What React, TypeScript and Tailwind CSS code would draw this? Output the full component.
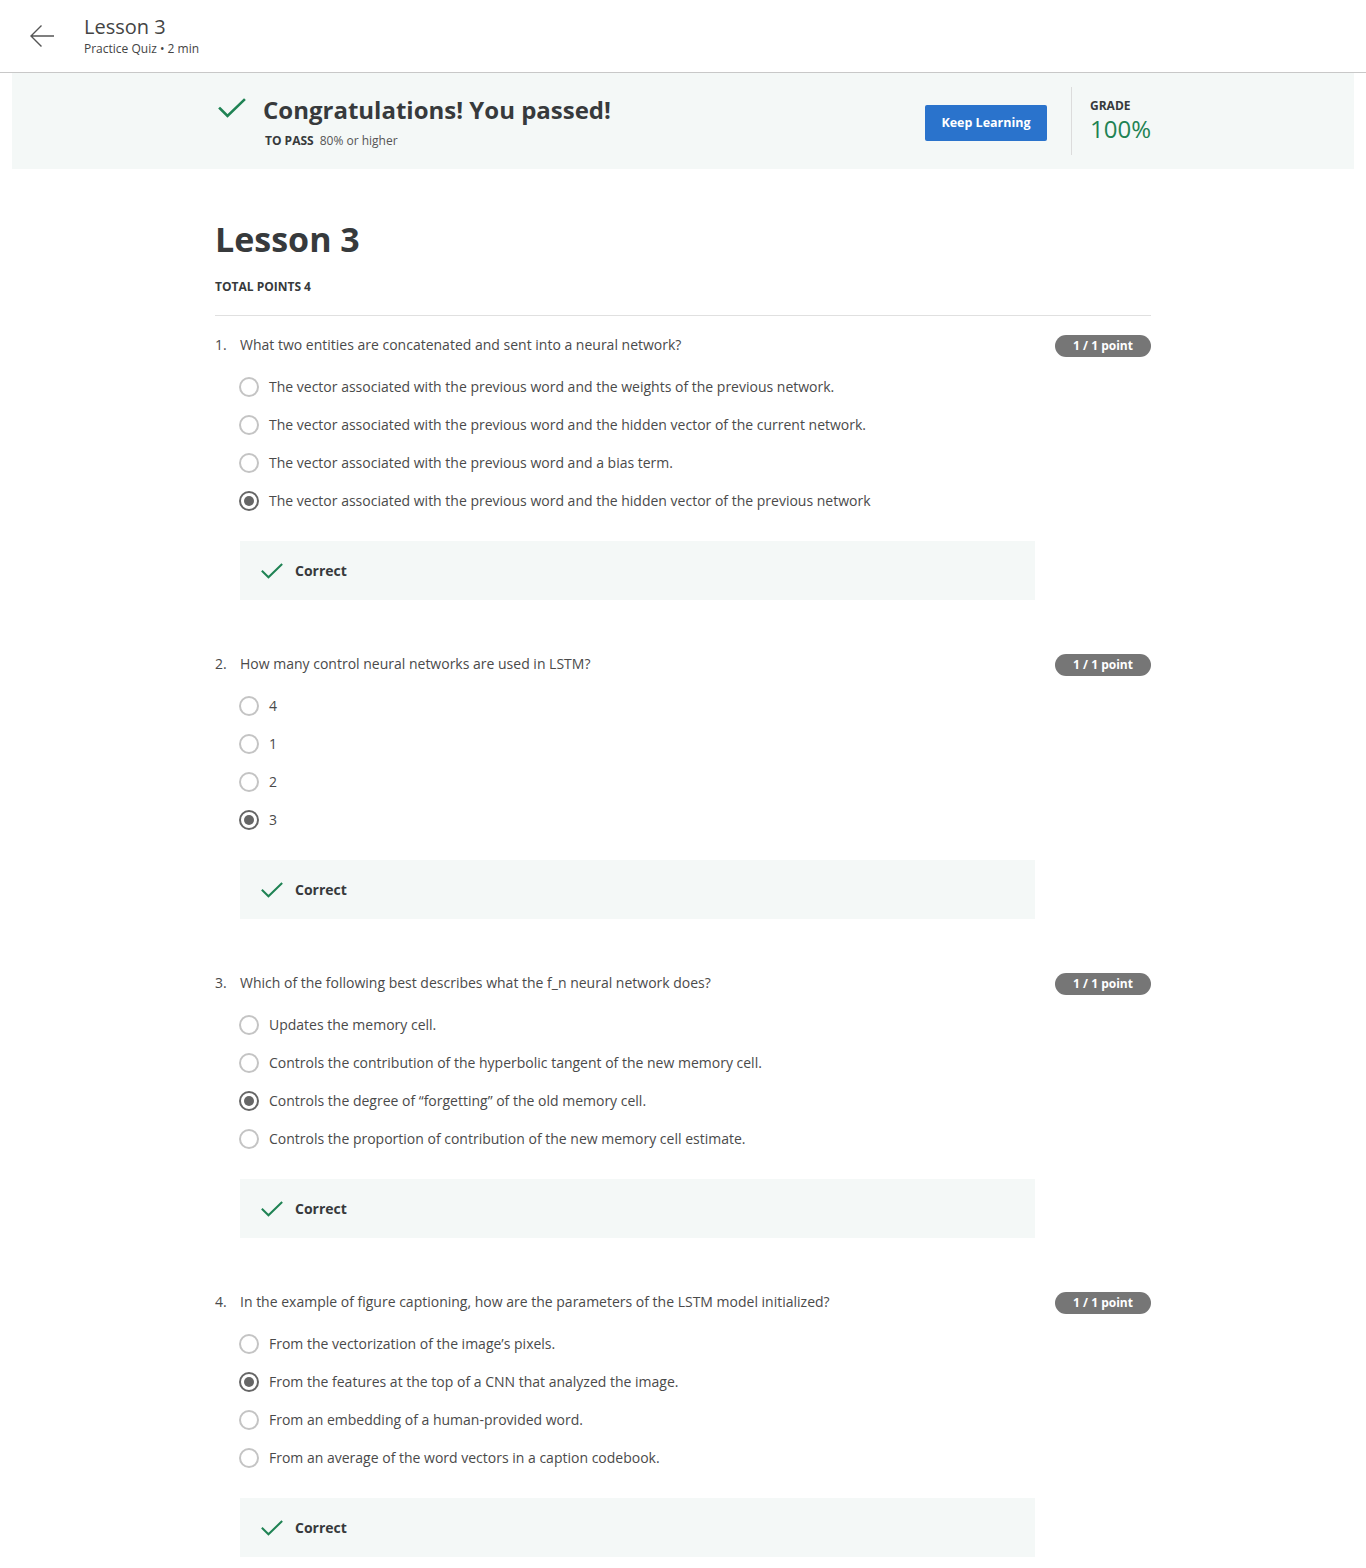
import React from "react";

const questions = [
  {
    q: "What two entities are concatenated and sent into a neural network?",
    options: [
      "The vector associated with the previous word and the weights of the previous network.",
      "The vector associated with the previous word and the hidden vector of the current network.",
      "The vector associated with the previous word and a bias term.",
      "The vector associated with the previous word and the hidden vector of the previous network",
    ],
    selected: 3,
  },
  {
    q: "How many control neural networks are used in LSTM?",
    options: ["4", "1", "2", "3"],
    selected: 3,
  },
  {
    q: "Which of the following best describes what the f_n neural network does?",
    options: [
      "Updates the memory cell.",
      "Controls the contribution of the hyperbolic tangent of the new memory cell.",
      "Controls the degree of \u201cforgetting\u201d of the old memory cell.",
      "Controls the proportion of contribution of the new memory cell estimate.",
    ],
    selected: 2,
  },
  {
    q: "In the example of figure captioning, how are the parameters of the LSTM model initialized?",
    options: [
      "From the vectorization of the image\u2019s pixels.",
      "From the features at the top of a CNN that analyzed the image.",
      "From an embedding of a human-provided word.",
      "From an average of the word vectors in a caption codebook.",
    ],
    selected: 1,
  },
];

function Check({ className }: { className?: string }) {
  return (
    <svg viewBox="0 0 28 20" className={className} fill="none">
      <path d="M2 10.5 L9.5 18 L26 2" stroke="#1f8354" strokeWidth="2.6" strokeLinecap="square" />
    </svg>
  );
}

function Radio({ checked }: { checked: boolean }) {
  return (
    <span
      className={`flex h-5 w-5 shrink-0 items-center justify-center rounded-full border-2 ${
        checked ? "border-[#666]" : "border-[#c4c4c4]"
      }`}
    >
      {checked && <span className="h-[10px] w-[10px] rounded-full bg-[#666]" />}
    </span>
  );
}

export default function App() {
  return (
    <div className="min-h-screen bg-white font-['Open_Sans',sans-serif] text-[#373a3c]">
      {/* top bar */}
      <header className="flex h-[73px] items-start border-b border-[#c8c8c8]">
        <button aria-label="Back" className="ml-[28px] mt-[24px] flex h-6 w-7 items-center justify-center">
          <svg viewBox="0 0 26 24" className="h-6 w-[26px]" fill="none">
            <path d="M25 12 H2 M12.5 1.5 L2 12 L12.5 22.5" stroke="#555" strokeWidth="1.4" />
          </svg>
        </button>
        <div className="ml-[28px] mt-[14px] flex flex-col">
          <span className="text-[20px] leading-[26px] text-[#444]">Lesson 3</span>
          <span className="mt-[1px] text-[12px] leading-[16px] text-[#444]">Practice Quiz • 2 min</span>
        </div>
      </header>

      {/* pass banner */}
      <section className="mx-3 flex h-[96px] items-center bg-[#f4f8f7]">
        <div className="mx-auto flex w-[936px] items-center">
          <Check className="ml-[3px] mt-[-26px] h-5 w-7" />
          <div className="ml-[17px] flex flex-col">
            <h2 className="text-[24px] font-bold leading-[32px] text-[#373a3c]">Congratulations! You passed!</h2>
            <p className="ml-[2px] mt-[7px] text-[12px] leading-[16px] text-[#555]">
              <span className="mr-[6px] font-bold text-[#373a3c]">TO PASS</span>80% or higher
            </p>
          </div>
          <div className="ml-auto flex items-center">
            <button className="mt-1 h-9 w-[122px] rounded-[2px] bg-[#2a73cc] text-[12.5px] font-bold text-white">
              Keep Learning
            </button>
            <div className="ml-6 h-[68px] w-px bg-[#dcdcdc]" />
            <div className="ml-[18px] flex w-[61px] flex-col">
              <span className="text-[12px] font-bold leading-[16px] text-[#373a3c]">GRADE</span>
              <span className="text-[24px] leading-[30px] text-[#1f8354]">100%</span>
            </div>
          </div>
        </div>
      </section>

      {/* quiz */}
      <main className="mx-auto w-[936px] pt-[48px]">
        <h1 className="text-[34px] font-bold leading-[44px] text-[#373a3c]">Lesson 3</h1>
        <p className="mt-[18px] text-[12px] font-bold leading-[16px] text-[#373a3c]">TOTAL POINTS 4</p>
        <hr className="mt-[20px] border-t border-[#e0e0e0]" />

        <div className="pt-[18px]">
          {questions.map((item, qi) => (
            <div key={qi} className="pb-[53px]">
              <div className="flex h-[22px] items-center justify-between">
                <p className="text-[14px] leading-[20px] text-[#4a4a4a]">
                  <span className="inline-block w-[25px]">{qi + 1}.</span>
                  {item.q}
                </p>
                <span className="mt-[2px] flex h-[22px] w-[96px] items-center justify-center rounded-full bg-[#767676] text-[12px] font-bold text-white">
                  1 / 1 point
                </span>
              </div>
              <ul className="mt-[12px] pl-[24px]">
                {item.options.map((opt, oi) => (
                  <li key={oi} className="flex h-[38px] items-center gap-[10px]">
                    <Radio checked={oi === item.selected} />
                    <span className="text-[14px] leading-[20px] text-[#4a4a4a]">{opt}</span>
                  </li>
                ))}
              </ul>
              <div className="ml-[25px] mt-[21px] flex h-[59px] w-[795px] items-center bg-[#f4f8f7] pl-[21px]">
                <Check className="h-4 w-[22px]" />
                <span className="ml-[12px] text-[14px] font-bold text-[#373a3c]">Correct</span>
              </div>
            </div>
          ))}
        </div>
      </main>
    </div>
  );
}
